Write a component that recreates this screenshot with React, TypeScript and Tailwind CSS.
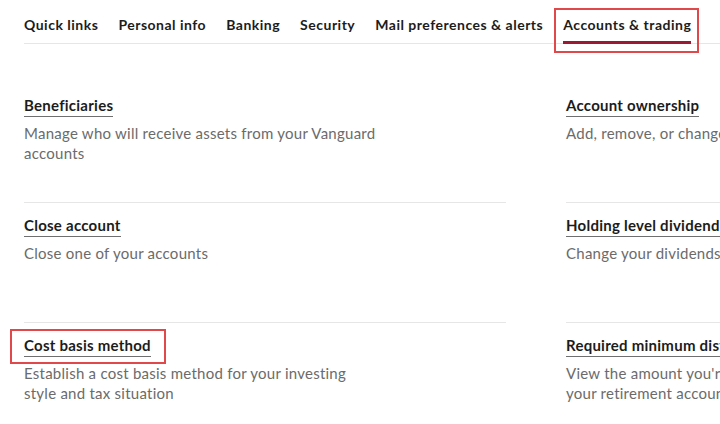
import React from 'react';

type Item = { title: string; desc: string; marked?: boolean };

const leftItems: Item[] = [
  { title: 'Beneficiaries', desc: 'Manage who will receive assets from your Vanguard accounts' },
  { title: 'Close account', desc: 'Close one of your accounts' },
  { title: 'Cost basis method', desc: 'Establish a cost basis method for your investing style and tax situation', marked: true },
];

const rightItems: Item[] = [
  { title: 'Account ownership', desc: 'Add, remove, or change owners on your accounts' },
  { title: 'Holding level dividend & capital gains', desc: 'Change your dividends and capital gains options' },
  { title: 'Required minimum distributions', desc: "View the amount you're required to withdraw from your retirement accounts" },
];

const tabs = ['Quick links', 'Personal info', 'Banking', 'Security', 'Mail preferences & alerts', 'Accounts & trading'];

const Cell: React.FC<{ item: Item; first: boolean }> = ({ item, first }) => (
  <div className={`h-[120px] border-t pt-[10px] ${first ? 'border-transparent' : 'border-[#e6e6e6]'}`}>
    <div className="relative inline-block">
      <span className="block text-[15px] leading-[21px] font-bold tracking-[0.25px] text-[#1c1c1c] border-b border-[#6f6f6f] whitespace-nowrap">
        {item.title}
      </span>
      {item.marked && (
        <span className="absolute top-[-6px] bottom-[-7px] left-[-14px] right-[-15px] border-2 border-[#e0494b]" />
      )}
    </div>
    <p className="mt-[6px] max-w-[356px] text-[15px] leading-[20px] tracking-[0.25px] text-[#6b6b6b]">{item.desc}</p>
  </div>
);

const App: React.FC = () => {
  return (
    <div className="w-[720px] h-[424px] overflow-hidden bg-white font-['Lato',sans-serif]">
      {/* TAB BAR */}
      <nav className="ml-6 w-[900px] h-[44px] flex gap-[20px] border-b border-[#e6e6e6]">
        {tabs.map((t, i) => {
          const active = i === tabs.length - 1;
          return (
            <div
              key={t}
              className={`relative pt-[17px] text-[14px] leading-[16px] font-bold tracking-[0.5px] text-[#1c1c1c] whitespace-nowrap ${active ? 'border-b-[3px] border-[#9a1b31] -mb-px' : ''}`}
            >
              {t}
              {active && (
                <span className="absolute left-[-9px] right-[-8px] top-[8px] bottom-[-12px] border-2 border-[#e0494b]" />
              )}
            </div>
          );
        })}
      </nav>

      {/* SETTINGS GRID */}
      <div className="ml-6 mt-[38px] w-[1100px] grid grid-cols-[482px_482px] gap-x-[60px]">
        {[0, 1, 2].map(r => (
          <React.Fragment key={r}>
            <Cell item={leftItems[r]} first={r === 0} />
            <Cell item={rightItems[r]} first={r === 0} />
          </React.Fragment>
        ))}
      </div>
    </div>
  );
};

export default App;
